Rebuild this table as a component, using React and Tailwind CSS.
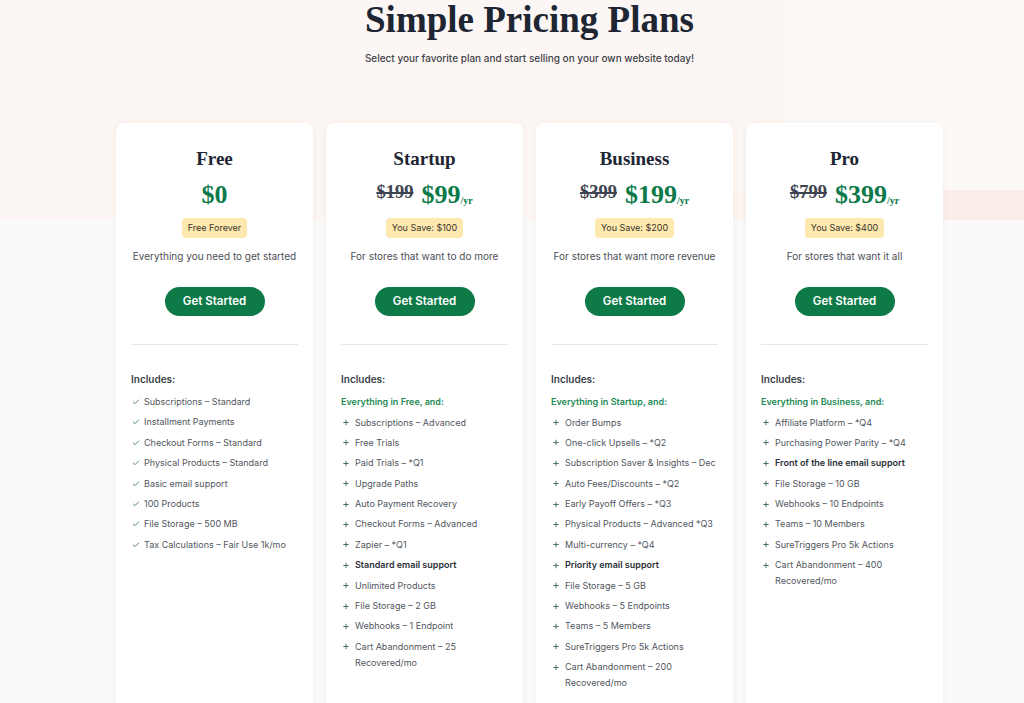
import { Check, Plus } from 'lucide-react';

const serif = { fontFamily: '"Liberation Serif", "Times New Roman", serif' };

const plans = [
  {
    name: 'Free',
    price: '$0',
    badge: 'Free Forever',
    desc: 'Everything you need to get started',
    icon: 'check',
    features: [
      'Subscriptions – Standard',
      'Installment Payments',
      'Checkout Forms – Standard',
      'Physical Products – Standard',
      'Basic email support',
      '100 Products',
      'File Storage – 500 MB',
      'Tax Calculations – Fair Use 1k/mo',
    ],
  },
  {
    name: 'Startup',
    old: '$199',
    price: '$99',
    badge: 'You Save: $100',
    desc: 'For stores that want to do more',
    lead: 'Everything in Free, and:',
    features: [
      'Subscriptions – Advanced',
      'Free Trials',
      'Paid Trials – *Q1',
      'Upgrade Paths',
      'Auto Payment Recovery',
      'Checkout Forms – Advanced',
      'Zapier – *Q1',
      { text: 'Standard email support', bold: true },
      'Unlimited Products',
      'File Storage – 2 GB',
      'Webhooks – 1 Endpoint',
      'Cart Abandonment – 25 Recovered/mo',
    ],
  },
  {
    name: 'Business',
    old: '$399',
    price: '$199',
    badge: 'You Save: $200',
    desc: 'For stores that want more revenue',
    lead: 'Everything in Startup, and:',
    features: [
      'Order Bumps',
      'One-click Upsells – *Q2',
      'Subscription Saver & Insights – Dec',
      'Auto Fees/Discounts – *Q2',
      'Early Payoff Offers – *Q3',
      'Physical Products – Advanced *Q3',
      'Multi-currency – *Q4',
      { text: 'Priority email support', bold: true },
      'File Storage – 5 GB',
      'Webhooks – 5 Endpoints',
      'Teams – 5 Members',
      'SureTriggers Pro 5k Actions',
      'Cart Abandonment – 200 Recovered/mo',
    ],
  },
  {
    name: 'Pro',
    old: '$799',
    price: '$399',
    badge: 'You Save: $400',
    desc: 'For stores that want it all',
    lead: 'Everything in Business, and:',
    features: [
      'Affiliate Platform – *Q4',
      'Purchasing Power Parity – *Q4',
      { text: 'Front of the line email support', bold: true },
      'File Storage – 10 GB',
      'Webhooks – 10 Endpoints',
      'Teams – 10 Members',
      'SureTriggers Pro 5k Actions',
      'Cart Abandonment – 400 Recovered/mo',
    ],
  },
];

function PlanCard({ plan }) {
  const isCheck = plan.icon === 'check';
  return (
    <div className="bg-white rounded-lg shadow-[0_1px_6px_rgba(120,90,70,0.08)] px-[15px] pt-[24px] pb-12">
      {/* Header */}
      <div className="flex flex-col items-center">
        <h2 style={serif} className="text-[19px] font-bold text-[#1e2533] leading-[24px]">
          {plan.name}
        </h2>
        <div className="flex items-end mt-[10px] h-[28px]" style={serif}>
          {plan.old && (
            <span className="text-[18.5px] font-bold text-[#3d4350] line-through decoration-[1.5px] mr-[8px] mb-[2px]">
              {plan.old}
            </span>
          )}
          <span className="text-[26px] font-bold text-[#0c7a48] leading-[28px]">{plan.price}</span>
          {plan.old && <span className="text-[10px] font-bold text-[#0c7a48] mb-[1px]">/yr</span>}
        </div>
        <span className="mt-[9px] bg-[#fde8b0] text-[#3b3428] text-[9px] leading-[20px] px-[6px] rounded-sm">
          {plan.badge}
        </span>
        <p className="mt-[8px] text-[10px] leading-[20px] text-[#4b4f57] whitespace-nowrap">{plan.desc}</p>
        <button className="mt-[21px] w-[100px] h-[29px] rounded-full bg-[#0d7a47] text-white text-[11.5px] font-semibold">
          Get Started
        </button>
      </div>

      <div className="mt-[28px] border-t border-[#e5e7eb]" />

      {/* Features */}
      <div className="pt-[28px]">
        <h3 className="text-[10px] font-semibold text-[#3a3f47] leading-[12px]">Includes:</h3>
        {plan.lead && (
          <p className="mt-[11px] text-[9px] font-semibold text-[#1d8a55] leading-[12px]">{plan.lead}</p>
        )}
        <ul className={isCheck ? 'mt-[9px] flex flex-col gap-[4.4px]' : 'mt-[6.5px] flex flex-col gap-[4.4px]'}>
          {plan.features.map((f, i) => {
            const item = typeof f === 'string' ? { text: f } : f;
            return (
              <li key={i} className={isCheck ? 'flex items-start gap-[4px]' : 'flex items-start gap-[5px]'}>
                <span className="w-[8px] h-[16px] flex items-center justify-center shrink-0 ml-[1px]">
                  {isCheck ? (
                    <Check className="w-[8px] h-[8px] text-[#2f6f50]" strokeWidth={2.5} />
                  ) : (
                    <Plus className="w-[9px] h-[9px] text-[#2e5c47]" strokeWidth={2.5} />
                  )}
                </span>
                <span
                  className={
                    item.bold
                      ? 'text-[9px] leading-[16px] font-semibold text-[#2a2f37]'
                      : 'text-[9px] leading-[16px] text-[#51565e]'
                  }
                >
                  {item.text}
                </span>
              </li>
            );
          })}
        </ul>
      </div>
    </div>
  );
}

export default function App() {
  return (
    <div
      className="min-h-screen relative overflow-hidden bg-[linear-gradient(to_bottom,#fcf7f4_0px,#fcf7f4_220px,#fafafa_220px)]"
      style={{ fontFamily: 'Inter, "Noto Sans", sans-serif' }}
    >
      {/* soft decorative band on the right */}
      <div className="absolute right-0 top-0 w-[240px] h-[190px] bg-[#fdf9f6]" />
      <div className="absolute right-0 top-[190px] w-[320px] h-[30px] bg-[linear-gradient(to_right,rgba(251,238,232,0),#fbeee8_30%)]" />

      <div className="relative w-[827px] ml-[116px]">
        <div className="flex flex-col items-center">
          <h1 style={serif} className="text-[37px] font-bold text-[#1e2533] leading-[40px]">
            Simple Pricing Plans
          </h1>
          <p className="mt-[11px] text-[10px] font-medium text-[#3f434a]">
            Select your favorite plan and start selling on your own website today!
          </p>
        </div>

        <div className="mt-[57px] grid grid-cols-4 gap-[13px]">
          {plans.map((p) => (
            <PlanCard key={p.name} plan={p} />
          ))}
        </div>
      </div>
    </div>
  );
}
